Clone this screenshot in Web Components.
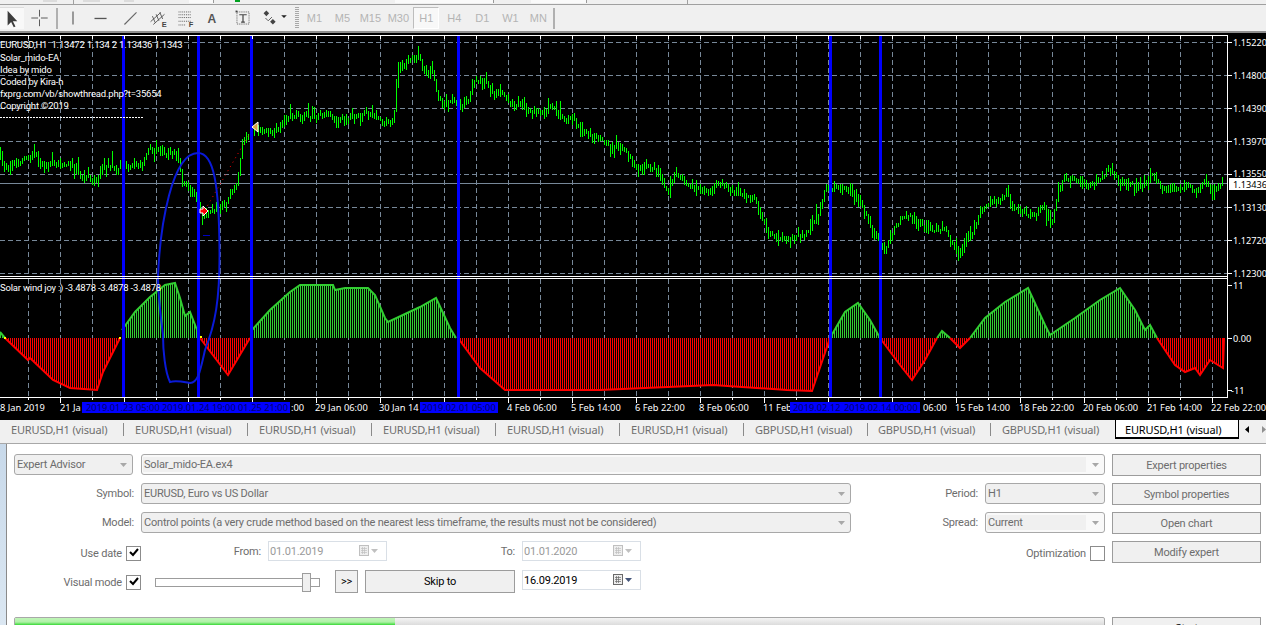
<!DOCTYPE html>
<html>
<head>
<meta charset="utf-8">
<title>Strategy Tester</title>
<style>
html,body{margin:0;padding:0;height:625px;overflow:hidden;background:#fff;font-family:"Noto Sans","Liberation Sans",sans-serif;}
mt-app{height:625px;overflow:hidden;}
</style>
</head>
<body>
<mt-app>
    <mt-topstrip></mt-topstrip>
    <mt-toolbar></mt-toolbar>
    <mt-chart></mt-chart>
    <mt-tabs></mt-tabs>
    <mt-tester></mt-tester>
</mt-app>
<script>
class App extends HTMLElement {
    constructor(){
        super();
        this.attachShadow({mode:'open'});
        this.shadowRoot.innerHTML=`<style>:host{display:flex;flex-direction:column;width:1266px;}</style><slot></slot>`;
    }
}

class TopStrip extends HTMLElement {
    constructor(){
        super();
        this.attachShadow({mode:'open'});
        this.shadowRoot.innerHTML=`
        <style>
        :host{display:flex;height:4px;background:#f0f0f0;border-bottom:1px solid #a0a0a0;overflow:hidden;}
        i{display:block;height:2px;background:#dcdcdc;}
        .w{background:#fafafa;height:3px;border-right:1px solid #999;}
        .g{background:#00a020;height:2px;}
        .s{width:1px;height:4px;background:#a0a0a0;}
        </style>
        <i style="margin-left:43px;width:14px"></i>
        <i class="s" style="margin-left:16px"></i>
        <i style="margin-left:9px;width:17px"></i>
        <i style="margin-left:24px;width:10px"></i>
        <i class="w" style="margin-left:55px;width:24px"></i>
        <i class="g" style="margin-left:21px;width:5px"></i>
        <i class="w" style="margin-left:155px;width:98px"></i>
        <i class="w" style="margin-left:37px;width:55px"></i>
        <i class="s" style="margin-left:100px"></i>
        `;
    }
}

const ICONS = {
    arrow:`<path d="M7 3v17l4-4 3 6 2-1-3-6h5z" fill="#3c3c3c"/>`,
    cross:`<path d="M13.5 5v7M13.5 15v7M5 13.5h7M15 13.5h7" stroke="#555" fill="none"/>`,
    vline:`<path d="M14 7v14" stroke="#555" stroke-width="1.2" fill="none"/>`,
    hline:`<path d="M7 14.500h13" stroke="#555" stroke-width="1.4" fill="none"/>`,
    diag:`<path d="M8 21l13-13" stroke="#666" stroke-width="1.2" fill="none"/>`,
    chan:`<path d="M6 18l11-10M9 21l12-11M8 12l3 7M12 10l3 7M16 8l3 7" stroke="#555" fill="none"/><text x="18" y="24" font-size="8" font-weight="700" fill="#444" font-family="Liberation Sans">E</text>`,
    fib:`<path d="M6 7.500h13M6 10.500h13M6 13.500h13M6 17.500h13M6 21.500h8" stroke="#555" stroke-dasharray="1 1" fill="none"/><text x="17" y="24" font-size="8" font-weight="700" fill="#444" font-family="Liberation Sans">F</text>`,
    txt:`<text x="7" y="19" font-size="13" font-weight="700" fill="#555" font-family="Liberation Sans">A</text>`,
    label:`<rect x="7.500" y="7.500" width="13" height="13" fill="none" stroke="#555" stroke-dasharray="1 1"/><path d="M10 10.500h8M14 10.500v8M12 18.500h4" stroke="#444" stroke-width="1.3" fill="none"/><rect x="6" y="6" width="2" height="2" fill="#444"/>`,
    arrows:`<path d="M6 9l3-3 3 3-3 3zM13 18l3-3 3 3-3 3z" fill="#444"/><path d="M8 14l3 3 4-4" stroke="#555" fill="none"/><path d="M25 11h6l-3 3z" fill="#222"/>`
};

class ToolBar extends HTMLElement {
    constructor(){
        super();
        this.attachShadow({mode:'open'});
        const tools=['vline','hline','diag','chan','fib','txt','label','arrows'];
        const periods=['M1','M5','M15','M30','H1','H4','D1','W1','MN'];
        this.shadowRoot.innerHTML=`
        <style>
        :host{display:flex;align-items:center;height:26px;background:#f0f0f0;border-bottom:2px solid #8f8f8f;font-family:"Liberation Sans",sans-serif;}
        .btn{width:28.3px;height:26px;flex:none;}
        .btn svg{display:block;overflow:visible;}
        .on{width:24px;height:21px;margin:0 1px 0 0;background:#f8f8f8;border-top:1px solid #ddd;display:block;}
        .sep{width:2px;height:21px;background:#b0b0b0;flex:none;}
        .grip{width:4px;height:22px;flex:none;margin-left:0;background:repeating-linear-gradient(#a8a8a8 0 1px,#f0f0f0 1px 2px);}
        .per{width:28px;height:22px;flex:none;display:flex;align-items:center;justify-content:center;box-sizing:border-box;font-size:11px;color:#b4b4b4;}
        .per.cur{width:26px;margin:0 1px;background:#f8f8f8;border:1px solid #bdbdbd;border-right-color:#fff;border-bottom-color:#fff;}
        </style>
        <div class="on"><svg width="24" height="21" viewBox="0 0 24 24">${ICONS.arrow}</svg></div>
        <div class="btn" style="margin-left:1px;width:26px"><svg width="27" height="26" viewBox="0 0 27 27">${ICONS.cross}</svg></div>
        <div class="sep" style="margin:0 1px 0 4px"></div>
        ${tools.map(t=>`<div class="btn"><svg width="28" height="26" viewBox="0 0 28 28">${ICONS[t]}</svg></div>`).join('')}
        <div class="grip" style="margin-left:10px"></div>
        <div style="width:1px;flex:none"></div>
        ${periods.map(p=>`<div class="per ${p==='H1'?'cur':''}">${p}</div>`).join('')}
        <div class="sep" style="margin-left:1px;width:2px"></div>
        `;
    }
}

class Chart extends HTMLElement {
    constructor(){
        super();
        this.attachShadow({mode:'open'});
    }
    interp(pts,x){
        for(let i=1;i<pts.length;i++){
            if(x<=pts[i][0]){
                const a=pts[i-1],b=pts[i];
                return a[1]+(b[1]-a[1])*(x-a[0])/((b[0]-a[0])||1);
            }
        }
        return pts[pts.length-1][1];
    }
    getPrice(){
        const pts=[[0,153],[5,170],[20,162],[35,153],[45,168],[67,163],[80,175],[97,180],[103,167],[117,168],[130,165],[143,165],[148,148],[163,153],[177,152],[182,180],[190,187],[197,197],[202,217],[217,208],[227,202],[237,182],[243,140],[253,128],[270,132],[293,116],[306,118],[325,113],[337,120],[368,113],[383,122],[393,125],[397,72],[410,58],[420,57],[423,73],[433,70],[437,97],[443,103],[453,102],[463,107],[470,97],[473,83],[485,80],[490,92],[503,93],[508,103],[517,105],[523,100],[528,112],[540,112],[552,108],[563,120],[573,118],[582,133],[597,135],[610,148],[622,147],[633,163],[643,167],[657,170],[667,190],[677,173],[693,187],[710,193],[718,182],[740,195],[755,200],[770,235],[790,238],[805,235],[818,215],[825,190],[845,188],[860,200],[875,235],[885,250],[895,225],[910,215],[925,228],[945,230],[960,255],[975,225],[985,205],[1000,200],[1007,193],[1013,210],[1033,217],[1043,203],[1052,223],[1058,193],[1063,180],[1080,180],[1090,187],[1110,170],[1127,185],[1140,187],[1152,173],[1163,190],[1187,185],[1198,193],[1203,180],[1213,192],[1222,182]];
        let seed=4242;
        const rnd=()=>{seed=(seed*16807)%2147483647;return seed/2147483647;};
        let d='',prev=153;
        for(let x=0;x<=1223;x+=2){
            const c=this.interp(pts,x)+(rnd()-.5)*5;
            const up=1.5+rnd()*rnd()*9+(rnd()<.06?rnd()*8:0), dn=1.5+rnd()*rnd()*9+(rnd()<.06?rnd()*8:0);
            d+=`M${x+.5} ${Math.round(Math.min(c-up,prev))}V${Math.round(Math.max(c+dn,prev))}`;
            prev=c;
        }
        return d;
    }
    getIndicator(){
        const green=[
            [[0,332],[5,338]],
            [[122,330],[135,312],[150,297],[165,285],[175,283],[180,298],[185,316],[190,312],[197,330],[200,338]],
            [[252,330],[270,310],[290,292],[300,285],[333,285],[335,290],[345,288],[368,288],[375,295],[385,318],[388,322],[420,307],[436,298],[450,328],[456,338]],
            [[830,338],[845,312],[858,303],[870,320],[880,338]],
            [[937,338],[942,331],[950,338]],
            [[970,338],[985,318],[1005,302],[1028,288],[1045,325],[1050,335],[1075,318],[1100,300],[1120,288],[1135,310],[1145,330],[1150,325],[1157,338]]
        ];
        const red=[
            [[5,338],[28,360],[30,358],[53,380],[70,388],[97,390],[103,372],[120,338]],
            [[200,338],[228,375],[250,338]],
            [[458,338],[480,368],[505,390],[600,390],[713,385],[787,390],[812,391],[830,338]],
            [[880,338],[900,365],[912,380],[925,360],[937,338]],
            [[950,338],[960,348],[970,338]],
            [[1157,338],[1175,365],[1185,372],[1195,368],[1200,375],[1210,360],[1223,368],[1224,338]]
        ];
        const build=(list,color)=>list.map(p=>{
            let d='';
            for(let x=Math.ceil(p[0][0]/2)*2;x<=p[p.length-1][0];x+=2){
                d+=`M${x+.5} 338V${Math.round(this.interp(p,x))}`;
            }
            return `<path d="${d}" stroke="${color}"/><polyline points="${p.join(' ')}" fill="none" stroke="${color}" stroke-width="2" shape-rendering="auto"/>`;
        }).join('');
        return build(green,'#32cd32')+build(red,'#ff0000');
    }
    getTemplate(){
        let vgrid='',ticks='';
        for(let x=28;x<1227;x+=32){
            vgrid+=`M${x+.5} 36V276M${x+.5} 279V397`;
            ticks+=`M${x+.5} 36V39M${x+.5} 397V${(x-60)%64===0?403:400}`;
        }
        const hs=[42,75,108,141,174,207,240,273];
        const hgrid=hs.map(y=>`M0 ${y+.5}H1227`).join('');
        const prices=[[42,'1.15220'],[75,'1.14800'],[108,'1.14390'],[141,'1.13970'],[173,'1.13550'],[207,'1.13130'],[240,'1.12720'],[273,'1.12300']];
        const times=[[0,'8 Jan 2019'],[60,'21 Ja'],[291,':00'],[315,'29 Jan 06:00'],[379,'30 Jan 14'],[507,'4 Feb 06:00'],[571,'5 Feb 14:00'],[635,'6 Feb 22:00'],[699,'8 Feb 06:00'],[763,'11 Feb'],[923,'06:00'],[955,'15 Feb 14:00'],[1019,'18 Feb 22:00'],[1083,'20 Feb 06:00'],[1147,'21 Feb 14:00'],[1211,'22 Feb 22:00']];
        const lines=[[44,'EURUSD,H1  1.13472 1.134 2 1.13436 1.1343'],[57,'Solar_mido-EA'],[69,'Idea by mido'],[81,'Coded by Kira-h'],[93,'fxprg.com/vb/showthread.php?t=35654'],[105,'Copyright ©2019']];
        const blue=[[82,290,[[86,'2019.01.23 05:00'],[162,'2019.01.24 19:00'],[238,'01.25 21:00']]],[420,498,[[422,'2019.02.01 05:00']]],[790,920,[[793,'2019.02.12'],[844,'2019.02.14 00:00']]]];
        const template=document.createElement('template');
        template.innerHTML=`
        <svg width="1266" height="387" viewBox="0 33 1266 387" shape-rendering="crispEdges">
            <rect x="0" y="33" width="1266" height="387" fill="#000"/>
            <path d="${vgrid}${hgrid}" stroke="#778899" stroke-dasharray="5 3" fill="none"/>
            <path d="M0 183.500H1227" stroke="#778899" fill="none"/>
            <path d="${this.getPrice()}" stroke="#00ff00" fill="none"/>
            <g fill="none">${this.getIndicator()}</g>
            <g fill="#ffff00"><rect x="4" y="337" width="2" height="2"/><rect x="119" y="337" width="2" height="2"/><rect x="200" y="336" width="2" height="2"/></g>
            <g fill="#0000ff"><rect x="122" y="36" width="3" height="361"/><rect x="197" y="36" width="3" height="361"/><rect x="250" y="36" width="3" height="361"/><rect x="457" y="36" width="3" height="361"/><rect x="829" y="36" width="3" height="361"/><rect x="879" y="36" width="3" height="361"/></g>
            <path d="M205 210L250 133" stroke="#ff0000" stroke-dasharray="1 4" shape-rendering="auto"/>
            <path d="M203 235.500h7" stroke="#0000c0"/>
            <path d="M158 277C160 225 172 153 198 153C214 153 219 185 219.500 250C220 300 215 325 205 350C200 372 198 383 190 383C184 382 176 380 170 382C165 372 163 350 163 335C160 310 158 295 158 277" fill="none" stroke="#0a1ad8" stroke-width="2" shape-rendering="auto"/>
            <g shape-rendering="auto">
                <path d="M200 209h3v-3l5 5-5 5v-3h-3z" fill="#ff0000" stroke="#fff"/>
                <path d="M252 127l6-5v10z" fill="#d8a040" stroke="#fff"/>
            </g>
            <path d="${ticks}" stroke="#fff" fill="none"/>
            <path d="M0 35.500H1227.500V397.500H0M0 276.500H1227M0 278.500H1227" stroke="#fff" fill="none"/>
            <path d="M1228 42.500h4M1228 75.500h4M1228 108.500h4M1228 141.500h4M1228 174.500h4M1228 207.500h4M1228 240.500h4M1228 273.500h4M1228 285.500h4M1228 338.500h4M1228 390.500h4" stroke="#fff"/>
            <path d="M0 117.500H144" stroke="#fff" stroke-dasharray="2 1"/>
            <rect x="1229" y="178" width="37" height="12" fill="#fff"/>
            <g class="o">
                ${lines.map(l=>`<text x="0" y="${l[0]+4}" xml:space="preserve">${l[1]}</text>`).join('')}
                <text x="0" y="291">Solar wind joy :) -3.4878 -3.4878 -3.4878</text>
            </g>
            <g class="p">
                ${prices.map(p=>`<text x="1233" y="${p[0]+4}">${p[1]}</text>`).join('')}
                <text x="1233" y="289">11</text>
                <text x="1233" y="342">0.00</text>
                <text x="1231" y="394">-11</text>
                <text x="1233" y="188" style="fill:#000">1.13436</text>
            </g>
            <g class="t">
                ${times.map(p=>`<text x="${p[0]}" y="411">${p[1]}</text>`).join('')}
            </g>
            ${blue.map(b=>`<rect x="${b[0]}" y="402" width="${b[1]-b[0]}" height="11" fill="#0000ff"/><g class="b">${b[2].map(l=>`<text x="${l[0]}" y="411">${l[1]}</text>`).join('')}</g>`).join('')}
        </svg>
        ${this.getStyles()}
        `;
        return template;
    }
    getStyles(){
        return `
        <style>
        :host{display:block;width:1266px;height:387px;}
        svg{display:block;}
        text{shape-rendering:auto;fill:#fff;}
        .o text{font:9.500px Roboto,"Liberation Sans",sans-serif;letter-spacing:-.2px;}
        .p text{font:9.200px "Noto Sans","Liberation Sans",sans-serif;}
        .t text{font:9.300px "Noto Sans","Liberation Sans",sans-serif;}
        .b text{font:9.300px "Noto Sans","Liberation Sans",sans-serif;fill:#00006a;}
        </style>
        `;
    }
    connectedCallback(){
        this.shadowRoot.appendChild(this.getTemplate().content.cloneNode(true));
    }
}

class Tabs extends HTMLElement {
    constructor(){
        super();
        this.attachShadow({mode:'open'});
        const names=['EURUSD','EURUSD','EURUSD','EURUSD','EURUSD','EURUSD','GBPUSD','GBPUSD','GBPUSD','EURUSD'];
        this.shadowRoot.innerHTML=`
        <style>
        :host{display:flex;height:24px;background:#f0f0f0;border-bottom:1px solid #a8a8a8;font:11px "Noto Sans","Liberation Sans",sans-serif;letter-spacing:-.15px;color:#6e6e6e;box-sizing:border-box;}
        .tab{width:124px;box-sizing:border-box;height:13px;margin-top:3px;flex:none;padding-left:11px;display:flex;align-items:center;white-space:nowrap;}
        .tab.sep{border-right:1px solid #8a8a8a;}
        .tab:first-child{width:122px;padding-left:8px;}
        .tab:nth-child(9){width:123px;padding-left:10px;}
        .tab.active{background:#fff;color:#000;border:1px solid #000;border-top:0;border-bottom-width:2px;height:19px;margin-top:0;padding:1px 0 0 9px;}
        .arr{display:flex;align-items:flex-start;gap:13px;margin-left:5px;padding-top:6px;}
        </style>
        ${names.map((n,i)=>`<div class="tab ${i===9?'active':(i===8?'':'sep')}">${n},H1 (visual)</div>`).join('')}
        <div class="arr">
            <svg width="5" height="7"><path d="M5 0v7L1 3.500z" fill="#000"/></svg>
            <svg width="5" height="7"><path d="M0 0v7l4-3.500z" fill="#909090"/></svg>
        </div>
        `;
    }
}

class Select extends HTMLElement {
    constructor(){
        super();
        this.attachShadow({mode:'open'});
        this.shadowRoot.innerHTML=`
        <style>
        :host{display:flex;align-items:center;box-sizing:border-box;height:21px;border:1px solid #a8a8a8;border-radius:3px;background:#f0f0f0;color:#6d6d6d;flex:none;}
        :host([band]){background:#f9f9f9;}
        .txt{flex:1;height:15px;line-height:15px;margin-left:1px;padding-left:1px;white-space:nowrap;overflow:hidden;}
        :host([band]) .txt{background:#f0f0f0;}
        .d{width:18px;flex:none;display:flex;justify-content:center;}
        </style>
        <div class="txt"><slot></slot></div>
        <div class="d"><svg width="7" height="4"><path d="M0 0h7L3.500 4z" fill="#a8a8a8"/></svg></div>
        `;
    }
}

class Button extends HTMLElement {
    constructor(){
        super();
        this.attachShadow({mode:'open'});
        this.shadowRoot.innerHTML=`
        <style>
        :host{display:flex;align-items:center;justify-content:center;box-sizing:border-box;height:22px;border:1px solid #9c9c9c;background:#f0f0f0;color:#6d6d6d;flex:none;}
        </style>
        <slot></slot>
        `;
    }
}

class DateField extends HTMLElement {
    constructor(){
        super();
        this.attachShadow({mode:'open'});
        const on=this.hasAttribute('enabled');
        const c=on?'#6a6a6a':'#c0c0c0', a=on?'#44557a':'#c0c0c0';
        this.shadowRoot.innerHTML=`
        <style>
        :host{display:flex;align-items:center;box-sizing:border-box;width:119px;height:20px;border:1px solid #d9dfe6;background:#fff;color:#9a9a9a;flex:none;padding-left:1px;}
        :host([enabled]){color:#000;}
        .v{flex:1;}
        svg{margin-right:7px;display:block;}
        </style>
        <div class="v"><slot></slot></div>
        <svg width="20" height="12">
            <rect x=".5" y=".5" width="9" height="10" fill="#eee" stroke="${c}"/>
            <path d="M2 3.500h6M2 5.500h6M2 7.500h6M3.500 2v7M5.500 2v7" stroke="${c}" stroke-width=".7" fill="none"/>
            <path d="M12 4h7l-3.500 4z" fill="${a}"/>
        </svg>
        `;
    }
}

class Check extends HTMLElement {
    constructor(){
        super();
        this.attachShadow({mode:'open'});
        this.shadowRoot.innerHTML=`
        <style>
        :host{display:block;box-sizing:border-box;width:15px;height:15px;border:1px solid #8c8c8c;background:#fff;flex:none;}
        svg{display:block;}
        </style>
        ${this.hasAttribute('checked')?'<svg width="13" height="13"><path d="M3 5l3 3 5-6" stroke="#000" stroke-width="2" fill="none"/></svg>':''}
        `;
    }
}

class Tester extends HTMLElement {
    constructor(){
        super();
        this.attachShadow({mode:'open'});
        this.shadowRoot.innerHTML=`
        <style>
        :host{display:block;height:181px;box-sizing:border-box;border-left:1px solid #8a8a8a;background:#fff;color:#6d6d6d;font:11px Roboto,"Liberation Sans",sans-serif;letter-spacing:-.2px;overflow:hidden;}
        .wrap{display:grid;grid-template-columns:1091px 149px;column-gap:7px;padding:10px 0 0 7px;}
        .left,.right{display:flex;flex-direction:column;gap:8px;}
        .right{gap:7px;}
        .row{display:flex;align-items:flex-start;height:21px;flex:none;}
        .lab{flex:none;text-align:right;white-space:nowrap;line-height:21px;}
        .track{flex:none;box-sizing:border-box;width:165px;height:9px;margin-top:8px;border:1px solid #9c9c9c;background:#fff;position:relative;}
        .thumb{position:absolute;left:146px;top:-6px;width:9px;height:19px;box-sizing:border-box;border:1px solid #9c9c9c;background:#f0f0f0;}
        .prog{box-sizing:border-box;width:1091px;height:20px;margin-top:18px;border:1px solid #a8a8a8;border-radius:2px;background:linear-gradient(#f4f4f4,#d8d8d8 8px);overflow:hidden;}
        .bar{width:380px;height:100%;background:linear-gradient(#c0f5b8,#b0f2a8 4px,#10d010 8px);}
        mt-button{width:149px;}
        </style>
        <div class="wrap">
            <div class="left">
                <div class="row">
                    <mt-select style="width:119px">Expert Advisor</mt-select>
                    <mt-select band style="width:964px;margin-left:8px">Solar_mido-EA.ex4</mt-select>
                </div>
                <div class="row">
                    <div class="lab" style="width:120px">Symbol:</div>
                    <mt-select style="width:710px;margin-left:7px">EURUSD, Euro vs US Dollar</mt-select>
                    <div class="lab" style="width:127px">Period:</div>
                    <mt-select style="width:120px;margin-left:7px">H1</mt-select>
                </div>
                <div class="row">
                    <div class="lab" style="width:120px">Model:</div>
                    <mt-select style="width:710px;margin-left:7px">Control points (a very crude method based on the nearest less timeframe, the results must not be considered)</mt-select>
                    <div class="lab" style="width:127px">Spread:</div>
                    <mt-select band style="width:120px;margin-left:7px">Current</mt-select>
                </div>
                <div class="row">
                    <div class="lab" style="width:108px;line-height:26px">Use date</div>
                    <mt-check checked style="margin:5px 0 0 4px"></mt-check>
                    <div class="lab" style="width:120px">From:</div>
                    <mt-date style="margin-left:7px">01.01.2019</mt-date>
                    <div class="lab" style="width:128px">To:</div>
                    <mt-date style="margin-left:7px">01.01.2020</mt-date>
                    <div class="lab" style="width:445px;line-height:26px">Optimization</div>
                    <mt-check style="margin:5px 0 0 4px"></mt-check>
                </div>
                <div class="row">
                    <div class="lab" style="width:108px;line-height:26px">Visual mode</div>
                    <mt-check checked style="margin:5px 0 0 4px"></mt-check>
                    <div class="track" style="margin-left:14px"><div class="thumb"></div></div>
                    <mt-button style="width:23px;height:23px;margin-left:15px;color:#000">&gt;&gt;</mt-button>
                    <mt-button style="width:150px;height:23px;margin-left:7px;color:#000">Skip to</mt-button>
                    <mt-date enabled style="margin-left:7px">16.09.2019</mt-date>
                </div>
                <div class="prog"><div class="bar"></div></div>
            </div>
            <div class="right">
                <mt-button>Expert properties</mt-button>
                <mt-button>Symbol properties</mt-button>
                <mt-button>Open chart</mt-button>
                <mt-button>Modify expert</mt-button>
                <mt-button style="margin-top:47px;color:#000">Start</mt-button>
            </div>
        </div>
        `;
    }
}

class Layout extends HTMLElement {
    constructor(){
        super();
        this.attachShadow({mode:'open'});
        this.shadowRoot.innerHTML=`
        <style>
        :host{display:flex;height:181px;flex:none;}
        .side{width:6px;flex:none;background:linear-gradient(#c8d9ea,#dbe7f2);}
        </style>
        <div class="side"></div>
        <mt-tester-body style="flex:1;min-width:0"></mt-tester-body>
        `;
    }
}

customElements.define('mt-app',App);
customElements.define('mt-topstrip',TopStrip);
customElements.define('mt-toolbar',ToolBar);
customElements.define('mt-chart',Chart);
customElements.define('mt-tabs',Tabs);
customElements.define('mt-select',Select);
customElements.define('mt-button',Button);
customElements.define('mt-date',DateField);
customElements.define('mt-check',Check);
customElements.define('mt-tester-body',Tester);
customElements.define('mt-tester',Layout);
</script>
</body>
</html>
